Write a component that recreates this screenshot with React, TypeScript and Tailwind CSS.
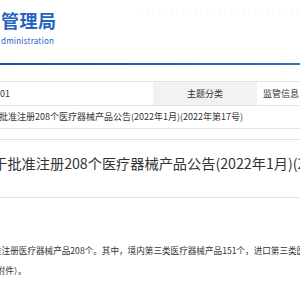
import React from "react";

export default function App() {
  const font = { fontFamily: '"Noto Sans CJK SC", "Noto Sans", sans-serif' };
  return (
    <div className="w-[300px] h-[300px] overflow-hidden bg-white text-[#333]" style={font}>
      {/* header */}
      <div className="relative h-[63px] pl-[1px] pt-[9px]">
        <svg className="absolute right-0 top-[8px]" width="160" height="10" viewBox="0 0 160 10">
          <line x1="0" y1="2" x2="160" y2="2" stroke="#f3f5f8" strokeWidth="1" strokeDasharray="3 3" />
          <line x1="0" y1="7" x2="160" y2="7" stroke="#f3f5f8" strokeWidth="1" strokeDasharray="2 4" />
        </svg>
        <div className="text-[18px] leading-[22px] font-bold text-[#2563c0] tracking-[0.5px]">管理局</div>
        <div className="mt-[5px] text-[8px] leading-[10px] text-[#2563c0] tracking-[0.2px]">dministration</div>
      </div>
      <div className="h-[2px] bg-gradient-to-r from-[#1e4f9e] via-[#2a5cb0] to-[#3b6cc2]" />
      <div className="h-[16px]" />
      {/* table */}
      <div className="border-t border-[#e2e2e2] text-[9px]">
        <div className="flex h-[24px] border-b border-[#e2e2e2]">
          <div className="w-[153px] flex items-center">01</div>
          <div className="w-[104px] flex items-center justify-center bg-[#f2f2f2]">主题分类</div>
          <div className="flex-1 flex items-center pl-[6px] whitespace-nowrap">监管信息</div>
        </div>
        <div className="flex h-[23px] items-center border-b border-[#e2e2e2] overflow-hidden">
          <div className="whitespace-nowrap ml-[-19px]">关于批准注册208个医疗器械产品公告(2022年1月)(2022年第17号)</div>
        </div>
      </div>
      <div className="h-[10px]" />
      {/* heading */}
      <div className="flex h-[59px] items-center border-t border-b border-[#e2e2e2] overflow-hidden pb-[9px]">
        <div className="whitespace-nowrap ml-[-21px] text-[14.2px] text-[#333]">关于批准注册208个医疗器械产品公告(2022年1月)(2022年第17号)</div>
      </div>
      {/* paragraph */}
      <div className="mt-[42px] text-[8.6px] leading-[20px] overflow-hidden">
        <div className="whitespace-nowrap ml-[-7px]">准注册医疗器械产品208个。其中，境内第三类医疗器械产品151个，进口第三类医疗器械产品43个</div>
        <div className="whitespace-nowrap ml-[-12px]">见附件）。</div>
      </div>
    </div>
  );
}
